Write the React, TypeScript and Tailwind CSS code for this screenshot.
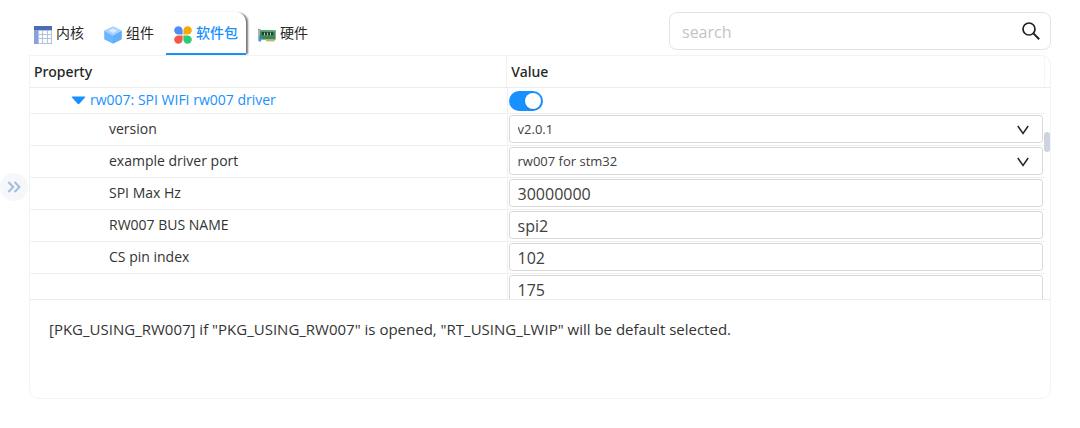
import { useState } from "react";

type Field = {
    id: string;
    label: string;
    value: string;
    options?: string[];
};

const fields: Field[] = [
    { id: "version", label: "version", value: "v2.0.1", options: ["v2.0.1"] },
    { id: "port", label: "example driver port", value: "rw007 for stm32", options: ["rw007 for stm32"] },
    { id: "spi-hz", label: "SPI Max Hz", value: "30000000" },
    { id: "bus", label: "RW007 BUS NAME", value: "spi2" },
    { id: "cs", label: "CS pin index", value: "102" },
    { id: "extra", label: "", value: "175" },
];

function KernelIcon() {
    return (
        <svg viewBox="0 0 18 18" className="h-[18px] w-[18px]" aria-hidden="true">
            <rect width="18" height="18" fill="#b4c2dd" />
            <rect width="18" height="4" fill="#4a6db5" />
            <rect y="4" width="4" height="14" fill="#86a1dc" />
            <g fill="#fafcff">
                <rect x="5" y="5" width="3" height="3" />
                <rect x="9" y="5" width="4" height="3" />
                <rect x="14" y="5" width="3" height="3" />
                <rect x="5" y="9" width="3" height="3" />
                <rect x="9" y="9" width="4" height="3" />
                <rect x="14" y="9" width="3" height="3" />
                <rect x="5" y="13" width="3" height="4" />
                <rect x="9" y="13" width="4" height="4" />
                <rect x="14" y="13" width="3" height="4" />
            </g>
        </svg>
    );
}

function ComponentIcon() {
    return (
        <svg viewBox="0 0 18 18" className="h-[18px] w-[18px]" aria-hidden="true">
            <path d="M9 0.3 17.8 4.6 9 9.6 0.2 4.6Z" fill="#a5d2ff" />
            <path d="M0.2 4.6 9 9.6V17.8L1 13.8Q0.2 13.3 0.2 12.4Z" fill="#6db5ff" />
            <path d="M17.8 4.6 9 9.6V17.8L17 13.8Q17.8 13.3 17.8 12.4Z" fill="#62aefd" />
            <path d="M9 2.3 13.4 4.5 9 7.1 4.6 4.5Z" fill="#d9edff" />
        </svg>
    );
}

function PackageIcon() {
    return (
        <svg viewBox="0 0 18 18" className="h-[18px] w-[18px]" aria-hidden="true">
            <path d="M4.4 0.2A4.2 4.2 0 1 0 4.4 8.6H8.6V4.4A4.2 4.2 0 0 0 4.4 0.2Z" fill="#4f8df9" />
            <path d="M13.6 0.2A4.2 4.2 0 1 1 13.6 8.6H9.4V4.4A4.2 4.2 0 0 1 13.6 0.2Z" fill="#f7a806" />
            <path d="M4.4 17.8A4.2 4.2 0 1 1 4.4 9.4H8.6V13.6A4.2 4.2 0 0 1 4.4 17.8Z" fill="#f4564a" />
            <path d="M13.6 17.8A4.2 4.2 0 1 0 13.6 9.4H9.4V13.6A4.2 4.2 0 0 0 13.6 17.8Z" fill="#2bcb77" />
        </svg>
    );
}

function HardwareIcon() {
    return (
        <svg viewBox="0 0 18 18" className="h-[18px] w-[18px]" aria-hidden="true">
            <path d="M1 3.2V15" stroke="#8b9299" strokeWidth="1.4" />
            <path d="M0 3.4H2.6" stroke="#8b9299" strokeWidth="1" />
            <path d="M2 4 17.6 4.6V13.8L2 13.4Z" fill="#3a8757" />
            <path d="M2 4 17.6 4.6V6L2 5.4Z" fill="#5fa577" />
            <g fill="#23402f">
                <rect x="4" y="6" width="2" height="3" />
                <rect x="7" y="6" width="2" height="3" />
                <rect x="10" y="6.2" width="2" height="3" />
                <rect x="13" y="6.2" width="2" height="3" />
            </g>
            <g fill="#c4dcc0">
                <rect x="6.1" y="7" width="0.8" height="2.4" />
                <rect x="9.1" y="7" width="0.8" height="2.4" />
                <rect x="12.1" y="7" width="0.8" height="2.4" />
            </g>
            <path d="M1.2 9.6 4.2 11.6 2.8 15.6H1.2Z" fill="#2f8fe0" />
            <rect x="8" y="13.4" width="8.6" height="2" fill="#cdb068" />
        </svg>
    );
}

const tabs = [
    { id: "kernel", label: "内核", Icon: KernelIcon },
    { id: "component", label: "组件", Icon: ComponentIcon },
    { id: "package", label: "软件包", Icon: PackageIcon },
    { id: "hardware", label: "硬件", Icon: HardwareIcon },
];

function FieldInput({ field }: { field: Field }) {
    const [value, setValue] = useState(field.value);
    const name = field.label || "value";

    if (field.options) {
        return (
            <div className="relative">
                <select
                    id={field.id}
                    aria-label={name}
                    value={value}
                    onChange={(e) => setValue(e.target.value)}
                    className="block h-7 w-full appearance-none rounded-[3px] border border-[#d9d9d9] bg-white px-2 text-[13px] text-[#404040]"
                >
                    {field.options.map((o) => (
                        <option key={o}>{o}</option>
                    ))}
                </select>
                <svg
                    viewBox="0 0 12 10"
                    className="pointer-events-none absolute right-3.5 top-2.5 h-2.5 w-3"
                    aria-hidden="true"
                >
                    <path d="M0.8 1 6 8.4 11.2 1" fill="none" stroke="#262626" strokeWidth="1.5" />
                </svg>
            </div>
        );
    }

    return (
        <input
            id={field.id}
            type="text"
            aria-label={name}
            value={value}
            onChange={(e) => setValue(e.target.value)}
            className="block h-7 w-full rounded-[3px] border border-[#d9d9d9] bg-white px-2 pt-0.5 text-base text-[#404040]"
        />
    );
}

export default function App() {
    const [activeTab, setActiveTab] = useState("package");
    const [enabled, setEnabled] = useState(true);

    return (
        <div className="bg-white pt-3 pr-[29px] font-['Open_Sans','Noto_Sans_CJK_SC',sans-serif] text-[#333]">
            {/* Tabs y buscador */}
            <div className="flex items-start justify-between pl-[26px]">
                <div role="tablist" className="flex gap-1">
                    {tabs.map(({ id, label, Icon }) => (
                        <button
                            key={id}
                            type="button"
                            role="tab"
                            aria-selected={activeTab === id}
                            onClick={() => setActiveTab(id)}
                            className={
                                activeTab === id
                                    ? "flex h-[43px] items-center gap-1 rounded-t-[10px] border-b-2 border-[#1890ff] bg-white px-2 text-sm font-medium text-[#1890ff] shadow-[3px_0_2px_-1px_#777]"
                                    : "flex h-[43px] items-center gap-1 border-b-2 border-transparent px-2 text-sm text-[#262626]"
                            }
                        >
                            <span className="pt-1">
                                <Icon />
                            </span>
                            {label}
                        </button>
                    ))}
                </div>
                <label className="flex h-[38px] w-[382px] items-center rounded-lg border border-[#e3e3e3] pr-2.5 pl-3">
                    <input
                        type="search"
                        aria-label="search"
                        placeholder="search"
                        className="min-w-0 flex-1 pt-0.5 text-base outline-none placeholder:text-[#c4c4c4]"
                    />
                    <svg viewBox="0 0 18 18" className="h-[18px] w-[18px]" aria-hidden="true">
                        <circle cx="7" cy="7" r="6" fill="none" stroke="#1f1f1f" strokeWidth="1.7" />
                        <path d="M11.4 11.4 17.2 17.2" stroke="#1f1f1f" strokeWidth="2" />
                    </svg>
                </label>
            </div>

            <div className="flex items-start">
                <button
                    type="button"
                    aria-label="expand"
                    className="mt-[118px] mr-px flex h-7 w-7 shrink-0 items-center justify-center rounded-full bg-[#f5f7fa]"
                >
                    <svg viewBox="0 0 14 12" className="h-3 w-3.5" aria-hidden="true">
                        <path d="M1.4 1 6.2 6 1.4 11M7.6 1 12.4 6 7.6 11" fill="none" stroke="#a3bedb" strokeWidth="2" />
                    </svg>
                </button>

                <div className="relative min-w-0 flex-1 overflow-hidden rounded-[10px] rounded-tl-none border border-[#f3f3f3]">
                    {/* Tabla de propiedades */}
                    <div className="h-[244px] overflow-hidden border-b border-[#ececec]">
                        <div className="border-b border-[#ececec] pr-[5px]">
                            <table className="w-full table-fixed border-collapse text-left">
                                <thead>
                                    <tr className="h-[31px] font-['Noto_Sans',sans-serif] text-sm text-[#262626]">
                                        <th className="w-[47%] border-r border-[#f0f0f0] px-1 py-0 font-medium">Property</th>
                                        <th className="border-r border-[#f5f5f5] px-1 py-0 font-medium">Value</th>
                                    </tr>
                                </thead>
                            </table>
                        </div>
                        <div className="pr-[5px]">
                            <table className="w-full table-fixed border-collapse text-left text-sm">
                                <tbody>
                                    <tr className="h-[25px] border-b border-[#f0f0f0]">
                                        <td className="w-[47%] border-r border-[#f0f0f0] py-0 pl-[41px]">
                                            <button type="button" className="flex items-center gap-1 text-[#1890ff]">
                                                <svg viewBox="0 0 15 9" className="h-[9px] w-[15px]" aria-hidden="true">
                                                    <path d="M1.5 0.5H13.5Q15 0.5 14 1.6L8.6 7.6Q7.5 8.8 6.4 7.6L1 1.6Q0 0.5 1.5 0.5Z" fill="#1890ff" />
                                                </svg>
                                                rw007: SPI WIFI rw007 driver
                                            </button>
                                        </td>
                                        <td className="pt-0.5 pr-0.5 pb-0 pl-px">
                                            <label className="block h-5 w-[34px] cursor-pointer rounded-full bg-gray-300 p-0.5 has-checked:bg-[#1890ff]">
                                                <input
                                                    type="checkbox"
                                                    aria-label="rw007: SPI WIFI rw007 driver"
                                                    checked={enabled}
                                                    onChange={(e) => setEnabled(e.target.checked)}
                                                    className="block h-4 w-4 appearance-none rounded-full bg-white shadow-sm checked:ml-3.5"
                                                />
                                            </label>
                                        </td>
                                    </tr>
                                    {fields.map((field) => (
                                        <tr key={field.id} className="h-8 border-b border-[#f0f0f0]">
                                            <td className="border-r border-[#f0f0f0] py-0 pl-[79px]">
                                                <label htmlFor={field.id}>{field.label}</label>
                                            </td>
                                            <td className="py-0 pr-0.5 pl-px">
                                                <FieldInput field={field} />
                                            </td>
                                        </tr>
                                    ))}
                                </tbody>
                            </table>
                        </div>
                    </div>
                    <div className="absolute top-[76px] right-0 h-5 w-1.5 rounded-full bg-[#cdd3e0]" />

                    {/* Descripción */}
                    <p className="h-[98px] px-[19px] pt-[18px] text-[15px]">
                        [PKG_USING_RW007] if "PKG_USING_RW007" is opened, "RT_USING_LWIP" will be default selected.
                    </p>
                </div>
            </div>
        </div>
    );
}
